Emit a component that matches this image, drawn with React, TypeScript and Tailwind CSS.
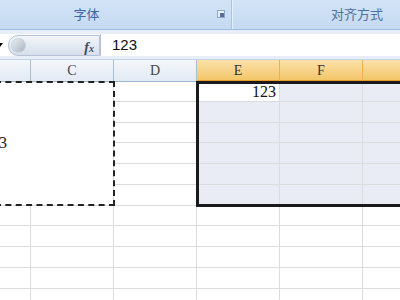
import React from "react";

const cols = [
  { w: 31, label: "" },
  { w: 83, label: "C" },
  { w: 83, label: "D" },
  { w: 83, label: "E", sel: true },
  { w: 83, label: "F", sel: true },
  { w: 60, label: "", sel: true },
];
const rowH = [20, 21, 20, 21, 21, 21, 20, 21, 21, 21, 21];

export default function App() {
  return (
    <div className="w-[400px] h-[300px] overflow-hidden bg-white relative" style={{ fontFamily: '"Liberation Sans", "Noto Sans CJK SC", sans-serif' }}>
      {/* Ribbon group labels */}
      <div className="h-[30px] flex bg-gradient-to-b from-[#d3e3f6] to-[#c4daf2] border-b border-[#9ebbe0]">
        <div className="w-[232px] relative flex items-center justify-center pb-[2px] border-r border-[#a9c4e6] shadow-[1px_0_0_#e6f0fb]">
          <span className="text-[13px] text-[#3f67a6] ml-[-58px]" style={{ fontFamily: '"Noto Sans CJK SC", sans-serif' }}>字体</span>
          <div className="absolute left-[217px] top-[10px] w-[8px] h-[8px] border border-[#8aa8cf] bg-[#e8f0fa] flex items-end justify-end">
            <div className="w-[4px] h-[4px] bg-[#54709a]" />
          </div>
        </div>
        <div className="flex-1 flex items-center justify-end pr-[17px] pb-[2px]">
          <span className="text-[13px] text-[#4f6f9f]" style={{ fontFamily: '"Noto Sans CJK SC", sans-serif' }}>对齐方式</span>
        </div>
      </div>

      {/* Formula bar */}
      <div className="h-[30px] bg-[#e7eef8] flex items-center pt-[1px] border-b border-[#c5d3e6]">
        <div className="h-[22px] w-[100px] flex items-center bg-white">
          <div className="w-[8px] h-full flex items-center justify-start">
            <div className="w-0 h-0 border-l-[3px] border-r-[3px] border-t-[4px] border-l-transparent border-r-transparent border-t-black ml-[-3px]" />
          </div>
          <div className="flex-1 h-[21px] rounded-l-[10px] bg-gradient-to-b from-[#f3f6fa] to-[#d6dfeb] border border-[#b3c2d6] flex items-center relative">
            <div className="w-[15px] h-[15px] rounded-full bg-gradient-to-br from-[#e9edf2] to-[#aab6c4] border border-[#c9d2dd] ml-[2px]" />
            <span className="absolute right-[5px] top-[1px] text-[14px] italic font-bold text-[#3e4a5c]" style={{ fontFamily: '"Liberation Serif", serif' }}>f<span className="text-[10px]">x</span></span>
          </div>
        </div>
        <div className="flex-1 h-[22px] bg-white border-l border-[#b6c4d6] flex items-center pl-[11px]">
          <span className="text-[15px] text-[#111]">123</span>
        </div>
      </div>

      {/* Grid */}
      <div className="relative">
        <div className="flex h-[22px]">
          {cols.map((c, i) => (
            <div
              key={i}
              className={
                "shrink-0 flex items-center justify-center border-r text-[14px] " +
                (c.sel
                  ? "bg-gradient-to-b from-[#fbe1aa] to-[#f3c668] border-[#f1b04c] border-b-[2px] border-b-[#e89a2c] text-[#333]"
                  : "bg-gradient-to-b from-[#f4f7fb] to-[#e2eaf4] border-[#a9bdd5] border-b border-b-[#9eb6ce] text-[#444]")
              }
              style={{ width: c.w, fontFamily: '"Liberation Serif", serif' }}
            >
              {c.label}
            </div>
          ))}
        </div>
        {rowH.map((h, r) => (
          <div key={r} className="flex" style={{ height: h }}>
            {cols.map((c, i) => {
              const inSel = i >= 3 && r < 6;
              const inMarq = i <= 1 && r < 6;
              const active = i === 3 && r === 0;
              return (
                <div
                  key={i}
                  className={
                    "shrink-0 border-b border-r border-[#dadcdd] " +
                    (inSel && !active ? "bg-[#e9ebf5] " : "bg-white ") +
                    (inMarq && i === 0 ? "border-r-white " : "") +
                    (inMarq && r < 5 ? "border-b-white " : "") +
                    (active ? "flex items-center justify-end pr-[3px]" : "")
                  }
                  style={{ width: c.w }}
                >
                  {active && (
                    <span className="text-[16px] text-[#111]" style={{ fontFamily: '"Liberation Serif", serif' }}>123</span>
                  )}
                </div>
              );
            })}
          </div>
        ))}
        {/* visible end of the merged cell's text */}
        <div className="absolute left-[-1px] top-[72px] text-[16px] leading-[22px] text-[#222]" style={{ fontFamily: '"Liberation Serif", serif' }}>3</div>
        {/* copy marquee */}
        <div className="absolute left-[-5px] top-[21px] w-[120px] h-[125px] border-[2px] border-dashed border-[#222]" />
        {/* selection border */}
        <div className="absolute left-[196px] top-[21px] w-[220px] h-[126px] border-[3px] border-[#1a1a1a]" />
      </div>
    </div>
  );
}
